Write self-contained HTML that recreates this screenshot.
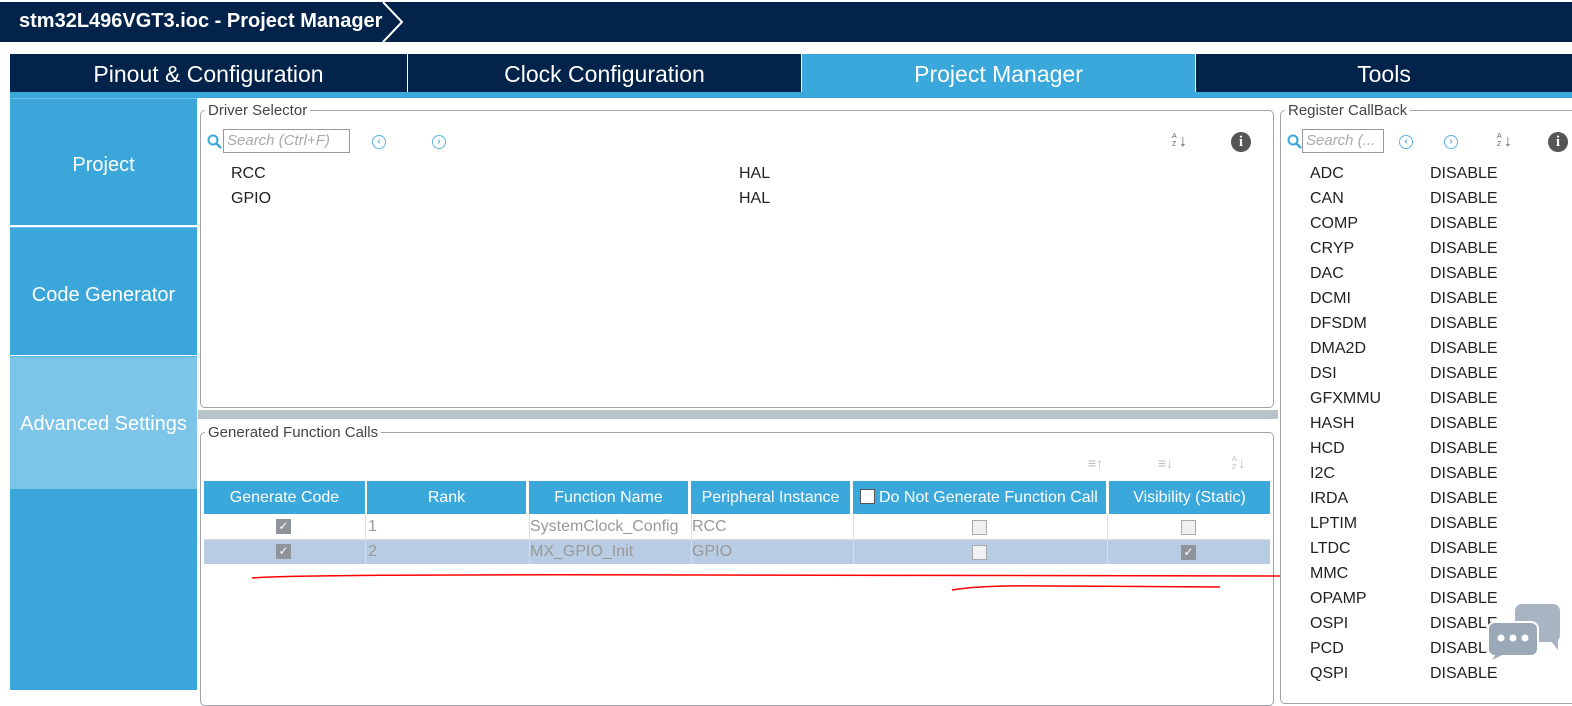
<!DOCTYPE html><html><head><style>
body{margin:0;width:1572px;height:690px;overflow:hidden;background:#fff;font-family:"Liberation Sans",sans-serif;position:relative}
.a{position:absolute}
.tab{position:absolute;top:54px;height:38px;background:#03234b;color:#fff;font-size:23px;text-align:center;line-height:40px}
.side{position:absolute;left:10px;width:187px;background:#3aa6da;color:#fff;font-size:20px;text-align:center}
fieldset{position:absolute;border:1px solid #a0a4a8;border-radius:5px;margin:0;padding:0}
legend{font-size:15px;color:#444;padding:0 3px;margin-left:4px}
.t{position:absolute;font-size:16px;color:#222}
.th{position:absolute;top:481px;height:33px;background:#3aa8db;color:#fff;font-size:16px;text-align:center;line-height:33px}
.cell{position:absolute;height:24px;font-size:16px;color:#999;line-height:24px;border-right:1px solid #ddd}
.cb{position:absolute;width:13px;height:13px;border:1px solid #aaa;background:#eef0f2}
.ck{position:absolute;width:15px;height:15px;background:#8e9499;color:#fff;font-size:12px;line-height:15px;text-align:center}
.srch{position:absolute;border:1px solid #999;height:22px;font-size:15px;font-style:italic;color:#aaa;line-height:22px;padding-left:3px}
.circ{position:absolute;width:12px;height:12px;border:1.5px solid #5bb5e0;border-radius:50%;color:#5bb5e0;font-size:10px;line-height:12px;text-align:center;font-weight:bold}
.info{position:absolute;width:20px;height:20px;border-radius:50%;background:#555;color:#fff;font-size:15px;font-weight:bold;text-align:center;line-height:20px;font-family:"Liberation Serif",serif}
</style></head><body>
<div class="a" style="left:0;top:2px;width:1572px;height:40px;background:#03234b"></div>
<div class="a" style="left:19px;top:10px;color:#fff;font-weight:bold;font-size:20px">stm32L496VGT3.ioc - Project Manager</div>
<svg class="a" style="left:380px;top:2px" width="30" height="40"><polyline points="3,0 22,20 3,40" fill="none" stroke="#fff" stroke-width="2"/></svg>
<div class="tab" style="left:10px;width:397px">Pinout &amp; Configuration</div>
<div class="tab" style="left:408px;width:393px">Clock Configuration</div>
<div class="tab" style="left:802px;width:393px;background:#3aa8db">Project Manager</div>
<div class="tab" style="left:1196px;width:376px">Tools</div>
<div class="a" style="left:10px;top:92px;width:1562px;height:6px;background:#3aa8db"></div>
<div class="a" style="left:10px;top:98px;width:187px;height:1px;background:#6cbde6"></div>
<div class="side" style="top:99px;height:126px;line-height:132px">Project</div>
<div class="side" style="top:227px;height:127px;line-height:134px;border-top:1px solid #6cbde6">Code Generator</div>
<div class="side" style="top:356px;height:132px;line-height:134px;background:#7cc4e8;border-top:1px solid #5bb3e0;border-bottom:1px solid #5bb3e0">Advanced Settings</div>
<div class="side" style="top:489px;height:201px"></div>
<fieldset style="left:200px;top:102px;width:1072px;height:304px"><legend>Driver Selector</legend></fieldset>
<svg class="a" style="left:207px;top:134px" width="16" height="16"><circle cx="6" cy="6" r="4.5" fill="none" stroke="#3aa8db" stroke-width="2"/><line x1="9" y1="9" x2="14" y2="14" stroke="#3aa8db" stroke-width="2.5"/></svg>
<div class="srch" style="left:223px;top:129px;width:122px">Search (Ctrl+F)</div>
<div class="circ" style="left:372px;top:135px">&lsaquo;</div>
<div class="circ" style="left:432px;top:135px">&rsaquo;</div>
<div class="a" style="left:1179px;top:133px;font-size:16px;color:#666">&#8595;</div>
<div class="a" style="left:1172px;top:133px;font-size:7px;color:#666;line-height:8px">A<br>Z</div>
<div class="info" style="left:1231px;top:132px">i</div>
<div class="t" style="left:231px;top:165px">RCC</div><div class="t" style="left:739px;top:165px">HAL</div>
<div class="t" style="left:231px;top:190px">GPIO</div><div class="t" style="left:739px;top:190px">HAL</div>
<div class="a" style="left:198px;top:410px;width:1080px;height:9px;background:#b8c2c9"></div>
<fieldset style="left:200px;top:424px;width:1072px;height:280px"><legend>Generated Function Calls</legend></fieldset>
<div class="a" style="left:1088px;top:455px;font-size:14px;color:#bbb">&#8801;&#8593;</div>
<div class="a" style="left:1158px;top:455px;font-size:14px;color:#bbb">&#8801;&#8595;</div>
<div class="a" style="left:1238px;top:455px;font-size:15px;color:#bbb">&#8595;</div>
<div class="a" style="left:1232px;top:456px;font-size:7px;color:#bbb;line-height:8px">A<br>Z</div>
<div class="th" style="left:204px;width:161px">Generate Code</div>
<div class="th" style="left:367px;width:159px">Rank</div>
<div class="th" style="left:529px;width:159px">Function Name</div>
<div class="th" style="left:691px;width:159px">Peripheral Instance N...</div>
<div class="th" style="left:853px;width:253px">&nbsp;&nbsp;&nbsp;&nbsp;Do Not Generate Function Call</div>
<div class="a" style="left:860px;top:489px;width:13px;height:13px;border:1px solid #555;background:#fff"></div>
<div class="th" style="left:1109px;width:161px">Visibility (Static)</div>
<div class="a" style="left:204px;top:540px;width:1066px;height:24px;background:#b8cde4"></div>
<div class="cell" style="left:204px;top:515px;width:161px"></div><div class="cell" style="left:366px;top:515px;width:161px;padding-left:2px">1</div><div class="cell" style="left:528px;top:515px;width:161px;padding-left:2px">SystemClock_Config</div><div class="cell" style="left:690px;top:515px;width:161px;padding-left:2px">RCC</div><div class="cell" style="left:852px;top:515px;width:255px"></div>
<div class="cell" style="left:204px;top:540px;width:161px"></div><div class="cell" style="left:366px;top:540px;width:161px;padding-left:2px">2</div><div class="cell" style="left:528px;top:540px;width:161px;padding-left:2px">MX_GPIO_Init</div><div class="cell" style="left:690px;top:540px;width:161px;padding-left:2px">GPIO</div><div class="cell" style="left:852px;top:540px;width:255px"></div>
<div class="a" style="left:204px;top:539px;width:1066px;height:1px;background:#ddd"></div>
<div class="ck" style="left:276px;top:519px">&#10003;</div><div class="ck" style="left:276px;top:544px">&#10003;</div>
<div class="cb" style="left:972px;top:520px"></div><div class="cb" style="left:972px;top:545px"></div>
<div class="cb" style="left:1181px;top:520px"></div><div class="ck" style="left:1181px;top:545px">&#10003;</div>
<svg class="a" style="left:0;top:0" width="1572" height="690"><path d="M252 578 Q300 574 700 575 L1280 576" stroke="#f00" stroke-width="1.5" fill="none"/><path d="M952 590 Q980 585 1050 586 L1220 587" stroke="#f00" stroke-width="1.5" fill="none"/></svg>
<fieldset style="left:1280px;top:102px;width:300px;height:600px"><legend>Register CallBack</legend></fieldset>
<svg class="a" style="left:1287px;top:134px" width="16" height="16"><circle cx="6" cy="6" r="4.5" fill="none" stroke="#3aa8db" stroke-width="2"/><line x1="9" y1="9" x2="14" y2="14" stroke="#3aa8db" stroke-width="2.5"/></svg>
<div class="srch" style="left:1302px;top:129px;width:77px">Search (...</div>
<div class="circ" style="left:1399px;top:135px">&lsaquo;</div>
<div class="circ" style="left:1444px;top:135px">&rsaquo;</div>
<div class="a" style="left:1504px;top:133px;font-size:16px;color:#666">&#8595;</div>
<div class="a" style="left:1497px;top:133px;font-size:7px;color:#666;line-height:8px">A<br>Z</div>
<div class="info" style="left:1548px;top:132px">i</div>
<div class="a" style="left:1310px;top:161px;font-size:16px;color:#222;line-height:25px">ADC<br>CAN<br>COMP<br>CRYP<br>DAC<br>DCMI<br>DFSDM<br>DMA2D<br>DSI<br>GFXMMU<br>HASH<br>HCD<br>I2C<br>IRDA<br>LPTIM<br>LTDC<br>MMC<br>OPAMP<br>OSPI<br>PCD<br>QSPI</div>
<div class="a" style="left:1430px;top:161px;font-size:16px;color:#222;line-height:25px">DISABLE<br>DISABLE<br>DISABLE<br>DISABLE<br>DISABLE<br>DISABLE<br>DISABLE<br>DISABLE<br>DISABLE<br>DISABLE<br>DISABLE<br>DISABLE<br>DISABLE<br>DISABLE<br>DISABLE<br>DISABLE<br>DISABLE<br>DISABLE<br>DISABLE<br>DISABLE<br>DISABLE</div>
<svg class="a" style="left:1488px;top:604px" width="75" height="56"><rect x="27" y="0" width="45" height="38" rx="7" fill="#a8b4c2"/><path d="M62 36 L70 46 L70 32Z" fill="#a8b4c2"/><rect x="0" y="18" width="50" height="34" rx="7" fill="#9aa8b8" stroke="#fff" stroke-width="2"/><path d="M8 50 L4 56 L16 50Z" fill="#9aa8b8"/><circle cx="13" cy="34" r="3.5" fill="#fff"/><circle cx="25" cy="34" r="3.5" fill="#fff"/><circle cx="37" cy="34" r="3.5" fill="#fff"/></svg>
</body></html>
